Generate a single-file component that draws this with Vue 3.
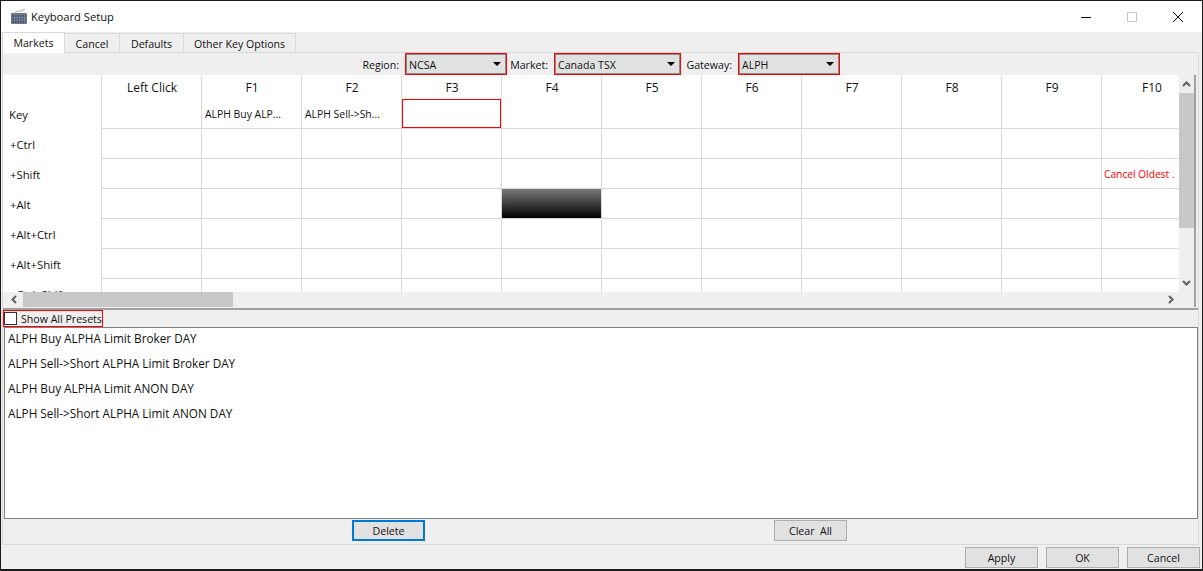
<script setup>
const cols = ['Left Click','F1','F2','F3','F4','F5','F6','F7','F8','F9','F10']
const rows = [
  { label:'Key', cells:{1:'ALPH Buy ALP...',2:'ALPH Sell->Sh...'} },
  { label:'+Ctrl', cells:{} },
  { label:'+Shift', cells:{10:'Cancel Oldest .'} },
  { label:'+Alt', cells:{} },
  { label:'+Alt+Ctrl', cells:{} },
  { label:'+Alt+Shift', cells:{} },
  { label:'+Ctrl+Shift', cells:{} },
]
const presets = ['ALPH Buy ALPHA Limit Broker DAY','ALPH Sell->Short ALPHA Limit Broker DAY','ALPH Buy ALPHA Limit ANON DAY','ALPH Sell->Short ALPHA Limit ANON DAY']
const tabs = ['Markets','Cancel','Defaults','Other Key Options']
const combos = [
  {label:'Region:',value:'NCSA'},
  {label:'Market:',value:'Canada TSX'},
  {label:'Gateway:',value:'ALPH'},
]
function cellClass(r, c) {
  return {
    sel: r === 0 && c === 3,
    dark: r === 3 && c === 4,
    red: r === 2 && c === 10,
  }
}
</script>

<template>
  <div class="window">
    <header class="titlebar">
      <svg class="appicon" width="18" height="17" viewBox="0 0 18 17">
        <path d="M5 6 C6 2 9 4 11 3 L15 1" fill="none" stroke="#9a9fa6" stroke-width="1"/>
        <rect x="1" y="5" width="16" height="11" rx="1" fill="#74797f"/>
        <rect x="2" y="7" width="14" height="8" fill="#46566e"/>
        <path d="M2 9.500H16M2 12H16M4.500 7V15M7 7V15M9.500 7V15M12 7V15M14.500 7V15" stroke="#8492a5" stroke-width=".7"/>
      </svg>
      <span class="title">Keyboard Setup</span>
      <div class="winbtns">
        <svg width="12" height="12" viewBox="0 0 12 12"><path d="M1 6.500H11" stroke="#000"/></svg>
        <svg width="12" height="12" viewBox="0 0 12 12"><rect x="1.500" y="1.500" width="9" height="9" fill="none" stroke="#c8c8c8"/></svg>
        <svg width="12" height="12" viewBox="0 0 12 12"><path d="M1 1L11 11M11 1L1 11" stroke="#000" fill="none"/></svg>
      </div>
    </header>

    <div class="tabbar">
      <div v-for="(t,i) in tabs" :key="t" class="tab" :class="{active:i===0}">{{ t }}</div>
    </div>

    <div class="pane">
      <div class="filters">
        <template v-for="c in combos" :key="c.label">
          <label class="flabel">{{ c.label }}</label>
          <div class="combo">
            <span class="cval">{{ c.value }}</span><i class="caret"></i>
          </div>
        </template>
      </div>

      <div class="gridwrap">
        <div class="gridview">
          <div class="grid">
            <div class="rowhead head"></div>
            <div v-for="c in cols" :key="c" class="colhead">{{ c }}</div>
            <template v-for="(r,ri) in rows" :key="r.label">
              <div class="rowhead" :class="{keyrow:ri===0}">{{ r.label }}</div>
              <div v-for="(c,ci) in cols" :key="c" class="cell" :class="cellClass(ri,ci)">{{ r.cells[ci] || '' }}</div>
            </template>
          </div>
        </div>
        <div class="vscroll">
          <svg class="arrow v" width="15" height="18" viewBox="0 0 15 18"><path d="M4 11L7.500 7.500L11 11" fill="none" stroke="#606060" stroke-width="2"/></svg>
          <div class="vtrack"><div class="vthumb"></div></div>
          <svg class="arrow v" width="15" height="18" viewBox="0 0 15 18"><path d="M4 7L7.500 10.500L11 7" fill="none" stroke="#606060" stroke-width="2"/></svg>
        </div>
        <div class="hscroll">
          <svg class="arrow" width="20" height="15" viewBox="0 0 20 15"><path d="M13 4L9.500 7.500L13 11" fill="none" stroke="#606060" stroke-width="2"/></svg>
          <div class="htrack"><div class="hthumb"></div></div>
          <svg class="arrow" width="15" height="15" viewBox="0 0 15 15"><path d="M5 4L8.500 7.500L5 11" fill="none" stroke="#606060" stroke-width="2"/></svg>
        </div>
        <div class="corner"></div>
      </div>

      <div class="splitter"></div>

      <div class="showall">
        <span class="check"></span>
        <span>Show All Presets</span>
      </div>

      <div class="list">
        <div v-for="p in presets" :key="p" class="item">{{ p }}</div>
      </div>

      <div class="listbtns">
        <button class="btn focus">Delete</button>
        <button class="btn">Clear&nbsp; All</button>
      </div>
    </div>

    <footer class="footer">
      <button class="btn">Apply</button>
      <button class="btn">OK</button>
      <button class="btn">Cancel</button>
    </footer>
  </div>
</template>

<style>
html, body { margin: 0; padding: 0; background: #fff; overflow: hidden; }
</style>

<style scoped>
.window {
  width: 1203px; height: 571px; box-sizing: border-box;
  border: 1px solid #1a1a1a; border-bottom-width: 2px;
  background: #efefef; display: flex; flex-direction: column;
  font-family: "Open Sans", "Noto Sans", sans-serif; font-size: 10.600px; color: #111;
  overflow: hidden;
}
.titlebar { height: 31px; flex: none; background: #fff; display: flex; align-items: center; padding-left: 9px; }
.appicon { margin-right: 3px; margin-top: -1px; flex: none; }
.title { font-size: 11.200px; }
.winbtns { margin-left: auto; display: flex; gap: 34px; margin-right: 18px; align-items: center; }
.tabbar { height: 20px; flex: none; display: grid; grid-template-columns: 63px 55px 64px 112px; padding-left: 1px; align-items: end; }
.tab {
  height: 19px; box-sizing: border-box; text-align: center; line-height: 20px;
  background: #efefef; border: 1px solid #d9d9d9; border-bottom: 0; border-left: 0;
}
.tab.active { height: 21px; background: #fff; border-left: 1px solid #d9d9d9; line-height: 20px; margin-bottom: -1px; position: relative; z-index: 1; }
.pane { flex: 1; min-height: 0; margin: 0 3px 0 1px; border: 1px solid #d9d9d9; display: flex; flex-direction: column; background: #efefef; }
.filters { height: 22px; flex: none; display: grid; grid-template-columns: 43px 102px 47px 127px 57px 102px; padding-left: 359px; align-items: center; }
.flabel { white-space: nowrap; text-align: right; padding-right: 6px; margin-top: 1px; }
.combo {
  height: 22px; box-sizing: border-box; border: 1px solid #f00; box-shadow: inset 0 0 0 1px #8c8c8c;
  background: #e1e1e1; display: flex; align-items: center; justify-content: space-between; padding: 0 5px 0 3px;
}
.cval { margin-top: 1px; }
.caret { width: 0; height: 0; border-left: 4px solid transparent; border-right: 4px solid transparent; border-top: 4px solid #000; }
.gridwrap { height: 232px; flex: none; display: grid; grid-template-columns: 1176px 15px 2px; grid-template-rows: 217px 15px; }
.gridview { overflow: hidden; background: #fff; padding-top: 1px; box-sizing: border-box; }
.grid { display: grid; grid-template-columns: 98px repeat(11, 100px); grid-auto-rows: 30px; grid-template-rows: 24px 29px; width: 1198px; }
.colhead { border-left: 1px solid #d9d9d9; box-sizing: border-box; text-align: center; line-height: 23px; font-size: 12px; padding-left: 1px; }
.rowhead { padding: 1px 0 0 7px; line-height: 30px; box-sizing: border-box; white-space: nowrap; font-size: 11.300px; }
.rowhead.head, .rowhead.keyrow { padding: 0 0 0 6px; line-height: 29px; }
.cell { position: relative; box-sizing: border-box; border-left: 1px solid #d9d9d9; border-bottom: 1px solid #d9d9d9; line-height: 29px; padding-left: 3px; white-space: nowrap; overflow: hidden; font-size: 10.400px; }
.cell.sel { overflow: visible; }
.cell.sel::after { content: ""; position: absolute; top: -1px; left: 0; right: 0; bottom: 0; border: 1px solid #f00; }
.cell.dark { background: linear-gradient(#7a7a7a, #000); background-clip: padding-box; }
.cell.red { color: #f00; padding-left: 2px; letter-spacing: -.1px; line-height: 30px; }
.vscroll { grid-row: 1; grid-column: 2; display: flex; flex-direction: column; background: #efefef; }
.vtrack { flex: 1; min-height: 0; }
.vthumb { height: 135px; background: #c8c8c8; }
.hscroll { grid-row: 2; grid-column: 1; display: flex; background: #efefef; }
.htrack { flex: 1; }
.hthumb { width: 210px; height: 15px; background: #c8c8c8; }
.corner { grid-row: 1 / 3; grid-column: 3; background: #a0a0a0; }
.arrow { flex: none; display: block; }
.splitter { height: 2px; flex: none; margin-top: 1px; background: #a0a0a0; }
.showall { height: 17px; flex: none; width: 100px; box-sizing: border-box; border: 1px solid #f00; display: flex; align-items: center; gap: 4px; white-space: nowrap; }
.check { width: 13px; height: 13px; box-sizing: border-box; border: 1px solid #333; background: #fff; flex: none; }
.list { height: 192px; flex: none; margin: 0 0 0 1px; box-sizing: border-box; border: 1px solid #808080; background: #fff; }
.item { height: 25px; line-height: 21px; padding-left: 3px; font-size: 11.750px; }
.listbtns { height: 25px; flex: none; display: grid; grid-template-columns: 422px 73px; padding: 1px 0 0 349px; box-sizing: border-box; align-items: start; }
.btn { width: 73px; height: 21px; box-sizing: border-box; background: #e1e1e1; border: 1px solid #adadad; font: inherit; color: #111; padding: 0; }
.btn.focus { border: 2px solid #0078d7; }
.footer { height: 24px; flex: none; display: flex; justify-content: flex-end; gap: 8px; padding: 2px 2px 0 0; box-sizing: border-box; }
</style>
